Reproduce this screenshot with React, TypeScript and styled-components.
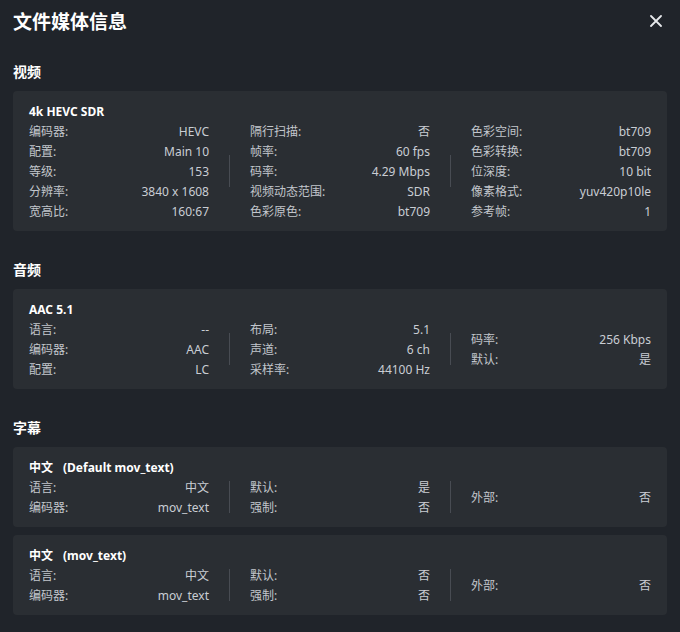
import React from "react";
import styled, { createGlobalStyle } from "styled-components";

const GlobalStyle = createGlobalStyle`
  html, body {
    margin: 0;
    padding: 0;
    background: #20242a;
  }
  body {
    font-family: "Noto Sans", "Noto Sans CJK SC", sans-serif;
    color: #c9cdd3;
  }
`;

const Dialog = styled.div`
  width: 680px;
  min-height: 632px;
  box-sizing: border-box;
  padding: 7px 13px 16px;
  background: #20242a;
`;

const Header = styled.div`
  display: flex;
  align-items: center;
  justify-content: space-between;
  height: 28px;
  margin-bottom: 27px;
`;

const Title = styled.h1`
  margin: 0;
  padding-top: 1px;
  font-size: 19px;
  line-height: 28px;
  font-weight: 700;
  color: #ffffff;
`;

const CloseButton = styled.button`
  width: 24px;
  height: 24px;
  margin-right: -1px;
  padding: 0;
  border: none;
  background: transparent;
  display: flex;
  align-items: center;
  justify-content: center;
  cursor: pointer;
`;

const Section = styled.section`
  & + & {
    margin-top: 29px;
  }
`;

const SectionTitle = styled.h2`
  margin: 0 0 9px;
  font-size: 14px;
  line-height: 20px;
  font-weight: 700;
  color: #ffffff;
`;

const Cards = styled.div`
  display: flex;
  flex-direction: column;
  gap: 8px;
`;

const Card = styled.div`
  background: #2a2e33;
  border-radius: 4px;
  padding: 11px 16px 9px;
`;

const CardTitle = styled.div`
  font-size: 12px;
  line-height: 20px;
  font-weight: 700;
  color: #ffffff;
  display: flex;
  gap: 10px;
`;

const Columns = styled.div`
  display: flex;
  align-items: stretch;
`;

const Column = styled.div`
  width: 180px;
  display: flex;
  flex-direction: column;
  justify-content: center;
`;

const Divider = styled.div`
  width: 41px;
  display: flex;
  align-items: center;
  justify-content: center;

  &::before {
    content: "";
    width: 1px;
    height: 32px;
    margin-top: -2px;
    background: #484c53;
  }
`;

const Row = styled.div`
  display: flex;
  justify-content: space-between;
  font-size: 12px;
  line-height: 20px;
  white-space: nowrap;
`;

const Label = styled.span`
  color: #c2c6cc;
`;

const Value = styled.span`
  color: #c9cdd3;
`;

type Pair = [string, string];

type Stream = {
  title: string;
  note?: string;
  columns: Pair[][];
};

const video: Stream[] = [
  {
    title: "4k HEVC SDR",
    columns: [
      [
        ["编码器", "HEVC"],
        ["配置", "Main 10"],
        ["等级", "153"],
        ["分辨率", "3840 x 1608"],
        ["宽高比", "160:67"],
      ],
      [
        ["隔行扫描", "否"],
        ["帧率", "60 fps"],
        ["码率", "4.29 Mbps"],
        ["视频动态范围", "SDR"],
        ["色彩原色", "bt709"],
      ],
      [
        ["色彩空间", "bt709"],
        ["色彩转换", "bt709"],
        ["位深度", "10 bit"],
        ["像素格式", "yuv420p10le"],
        ["参考帧", "1"],
      ],
    ],
  },
];

const audio: Stream[] = [
  {
    title: "AAC 5.1",
    columns: [
      [
        ["语言", "--"],
        ["编码器", "AAC"],
        ["配置", "LC"],
      ],
      [
        ["布局", "5.1"],
        ["声道", "6 ch"],
        ["采样率", "44100 Hz"],
      ],
      [
        ["码率", "256 Kbps"],
        ["默认", "是"],
      ],
    ],
  },
];

const subtitles: Stream[] = [
  {
    title: "中文",
    note: "(Default mov_text)",
    columns: [
      [
        ["语言", "中文"],
        ["编码器", "mov_text"],
      ],
      [
        ["默认", "是"],
        ["强制", "否"],
      ],
      [["外部", "否"]],
    ],
  },
  {
    title: "中文",
    note: "(mov_text)",
    columns: [
      [
        ["语言", "中文"],
        ["编码器", "mov_text"],
      ],
      [
        ["默认", "否"],
        ["强制", "否"],
      ],
      [["外部", "否"]],
    ],
  },
];

const StreamCard: React.FC<{ stream: Stream }> = ({ stream }) => (
  <Card>
    <CardTitle>
      <span>{stream.title}</span>
      {stream.note && <span>{stream.note}</span>}
    </CardTitle>
    <Columns>
      {stream.columns.map((col, i) => (
        <React.Fragment key={i}>
          {i > 0 && <Divider />}
          <Column>
            {col.map(([label, value]) => (
              <Row key={label}>
                <Label>{label}:</Label>
                <Value>{value}</Value>
              </Row>
            ))}
          </Column>
        </React.Fragment>
      ))}
    </Columns>
  </Card>
);

const StreamSection: React.FC<{ title: string; streams: Stream[] }> = ({
  title,
  streams,
}) => (
  <Section>
    <SectionTitle>{title}</SectionTitle>
    <Cards>
      {streams.map((s, i) => (
        <StreamCard key={i} stream={s} />
      ))}
    </Cards>
  </Section>
);

const App: React.FC = () => {
  return (
    <>
      <GlobalStyle />
      <Dialog>
        <Header>
          <Title>文件媒体信息</Title>
          <CloseButton aria-label="关闭">
            <svg width="12" height="12" viewBox="0 0 12 12">
              <path
                d="M1 1 L11 11 M11 1 L1 11"
                stroke="#e6e8eb"
                strokeWidth="1.8"
                strokeLinecap="round"
              />
            </svg>
          </CloseButton>
        </Header>
        <StreamSection title="视频" streams={video} />
        <StreamSection title="音频" streams={audio} />
        <StreamSection title="字幕" streams={subtitles} />
      </Dialog>
    </>
  );
};

export default App;
